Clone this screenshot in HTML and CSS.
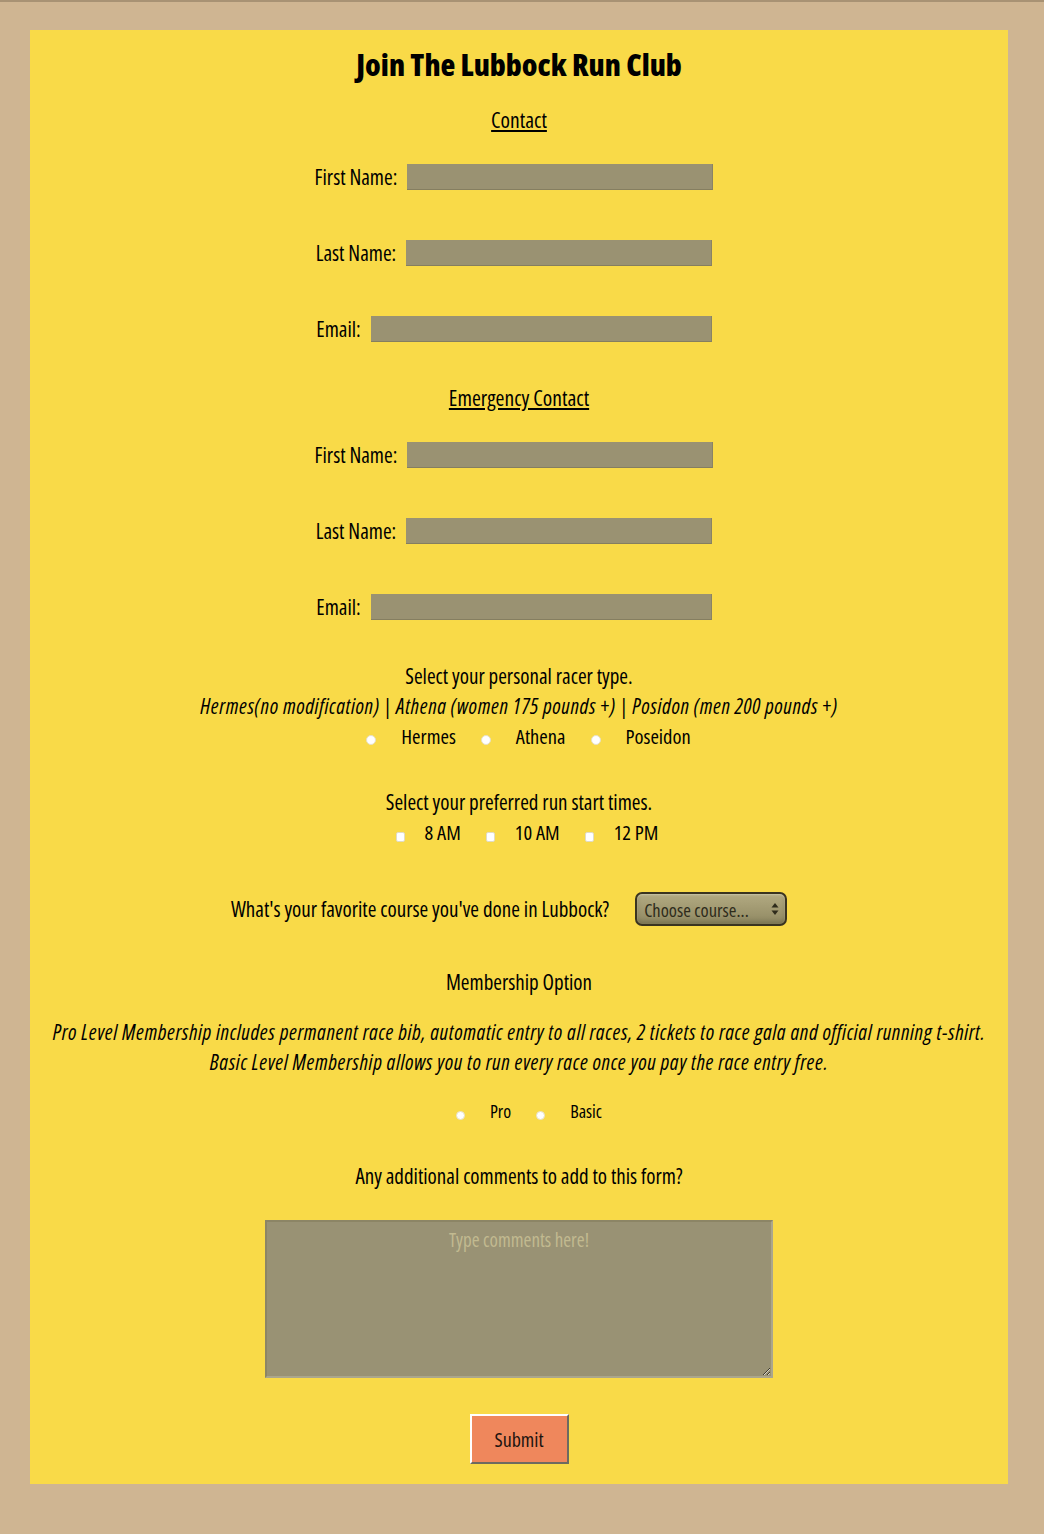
FILE: index.html
```html
<!DOCTYPE html>
<html lang="en">
<head>
<meta charset="utf-8">
<title>Join The Lubbock Run Club</title>
<link rel="stylesheet" href="styles.css">
</head>
<body>
<main class="card">
  <h1 class="title">Join The Lubbock Run Club</h1>
  <form class="form">
    <h2 class="section section-contact">Contact</h2>
    <div class="row row-first"><label>First Name:</label><input class="field field-name" type="text"></div>
    <div class="row row-gap"><label>Last Name:</label><input class="field field-name" type="text"></div>
    <div class="row row-gap"><label>Email:</label><input class="field field-email" type="email"></div>

    <h2 class="section section-emergency">Emergency Contact</h2>
    <div class="row row-first"><label>First Name:</label><input class="field field-name" type="text"></div>
    <div class="row row-gap"><label>Last Name:</label><input class="field field-name" type="text"></div>
    <div class="row row-gap"><label>Email:</label><input class="field field-email" type="email"></div>

    <p class="line racer-title">Select your personal racer type.</p>
    <p class="line italic">Hermes(no modification) | Athena (women 175 pounds +) | Posidon (men 200 pounds +)</p>
    <div class="choices choices-racer">
      <input type="radio" class="radio" name="racer"><span class="choice-label">Hermes</span>
      <input type="radio" class="radio" name="racer"><span class="choice-label">Athena</span>
      <input type="radio" class="radio" name="racer"><span class="choice-label">Poseidon</span>
    </div>

    <p class="line times-title">Select your preferred run start times.</p>
    <div class="choices choices-times">
      <input type="checkbox" class="check"><span class="choice-label check-label">8 AM</span>
      <input type="checkbox" class="check"><span class="choice-label check-label">10 AM</span>
      <input type="checkbox" class="check"><span class="choice-label check-label">12 PM</span>
    </div>

    <div class="course">
      <span>What's your favorite course you've done in Lubbock?</span>
      <div class="select">
        <span class="select-text">Choose course...</span>
        <span class="select-arrows">
          <svg width="8" height="14" viewBox="0 0 8 14"><path d="M4 1 L7.5 5.5 H0.5 Z" fill="#2e2b1b"/><path d="M4 13 L7.5 8.5 H0.5 Z" fill="#2e2b1b"/></svg>
        </span>
      </div>
    </div>

    <p class="line membership-title">Membership Option</p>
    <p class="para italic">Pro Level Membership includes permanent race bib, automatic entry to all races, 2 tickets to race gala and official running t-shirt.<br>Basic Level Membership allows you to run every race once you pay the race entry free.</p>
    <div class="choices choices-member">
      <input type="radio" class="radio radio-small" name="member"><span class="choice-label small-label">Pro</span>
      <input type="radio" class="radio radio-small" name="member"><span class="choice-label small-label">Basic</span>
    </div>

    <p class="line comments-title">Any additional comments to add to this form?</p>
    <textarea class="comments" placeholder="Type comments here!"></textarea>
    <button type="button" class="submit">Submit</button>
  </form>
</main>
</body>
</html>
```

FILE: styles.css
```css
html, body {
  margin: 0;
  padding: 0;
}

body {
  background: #cfb592;
  border-top: 2px solid #a89274;
  font-family: "Open Sans", "Noto Sans", sans-serif;
  font-stretch: 75%;
  color: #000;
  min-height: 1532px;
  box-sizing: border-box;
  padding-top: 28px;
}

.card {
  width: 978px;
  margin-left: 30px;
  background: #f9da48;
  padding: 14px 0 20px;
  box-sizing: border-box;
  height: 1454px;
}

.title {
  margin: 0;
  height: 40px;
  line-height: 40px;
  font-size: 30.5px;
  font-weight: 800;
  text-align: center;
}

.form {
  display: flex;
  flex-direction: column;
  align-items: center;
}

.section {
  margin: 0;
  height: 30px;
  line-height: 30px;
  font-size: 21.5px;
  font-weight: normal;
  text-decoration: underline;
  text-align: center;
}

.section-contact { margin-top: 21px; }
.section-emergency { margin-top: 39px; }

.row {
  display: flex;
  align-items: center;
  justify-content: center;
  gap: 10px;
  height: 30px;
  font-size: 21px;
  padding-right: 10px;
}

.row-first { margin-top: 27px; }
.row-gap { margin-top: 46px; }

.field {
  height: 26px;
  box-sizing: border-box;
  background: #9a9272;
  border: none;
  border-bottom: 1px solid #857e60;
  border-right: 1px solid #8a8365;
  margin: 0;
  padding: 0;
}

.field-name { width: 306px; }
.field-email { width: 341px; }

.line {
  margin: 0;
  height: 30px;
  line-height: 30px;
  font-size: 21px;
  text-align: center;
  white-space: nowrap;
}

.italic {
  font-style: italic;
  letter-spacing: 0.6px;
}

.racer-title { margin-top: 39px; }
.times-title { margin-top: 36px; }
.membership-title { margin-top: 41px; }
.comments-title { margin-top: 35px; }

.choices {
  display: flex;
  align-items: center;
  justify-content: center;
  height: 30px;
  font-size: 20.5px;
}

.choices-racer { padding-left: 19px; }
.choices-times { padding-left: 16px; }
.choices-member { margin-top: 19px; padding-left: 20px; }

.choice-label { margin: 0 25px; }
.check-label { margin: 0 25px 0 20px; }
.choice-label:last-child { margin-right: 0; }

.radio {
  appearance: none;
  -webkit-appearance: none;
  width: 10px;
  height: 10px;
  margin: 8px 0 0;
  border-radius: 50%;
  background: #fff;
  border: 1px solid #e6e0c8;
  box-sizing: border-box;
}

.radio-small {
  width: 9px;
  height: 9px;
}

.small-label { font-size: 18px; }

.check {
  appearance: none;
  -webkit-appearance: none;
  width: 9px;
  height: 10px;
  margin: 10px 0 0;
  border-radius: 2px;
  background: #fff;
  border: 1px solid #e0dbc4;
  box-sizing: border-box;
}

.course {
  margin-top: 45px;
  height: 34px;
  display: flex;
  align-items: center;
  justify-content: center;
  gap: 26px;
  font-size: 21px;
  padding-right: 20px;
}

.select {
  width: 152px;
  height: 34px;
  box-sizing: border-box;
  border: 2px solid #3a3420;
  border-radius: 7px;
  background: linear-gradient(#b2aa82 0%, #a39b73 45%, #8f8862 100%);
  box-shadow: inset 0 1px 2px rgba(255,255,240,0.35), inset 0 -3px 4px rgba(60,55,30,0.25);
  display: flex;
  align-items: center;
  justify-content: space-between;
  padding: 0 6px 0 7px;
  font-size: 18.5px;
  color: #2e2b1b;
  white-space: nowrap;
}

.select-arrows {
  display: flex;
  align-items: center;
}

.para {
  margin: 20px 0 0;
  line-height: 30px;
  font-size: 21px;
  text-align: center;
  white-space: nowrap;
}

.comments {
  margin-top: 29px;
  width: 508px;
  height: 158px;
  box-sizing: border-box;
  background: #999274;
  border: 2px solid;
  border-color: #8c8565 #aba68c #aba68c #8c8565;
  padding: 5px 4px;
  font-family: inherit;
  font-stretch: 75%;
  font-size: 19px;
  text-align: center;
  resize: both;
}

.comments::placeholder {
  color: #c2ba90;
}

.submit {
  margin-top: 36px;
  width: 99px;
  height: 50px;
  box-sizing: border-box;
  background: #ef875c;
  border: 2px solid;
  border-color: #ffffff #6e6a60 #6e6a60 #ffffff;
  font-family: inherit;
  font-stretch: 75%;
  font-size: 20px;
  color: #1c1410;
  padding: 0;
}
```
